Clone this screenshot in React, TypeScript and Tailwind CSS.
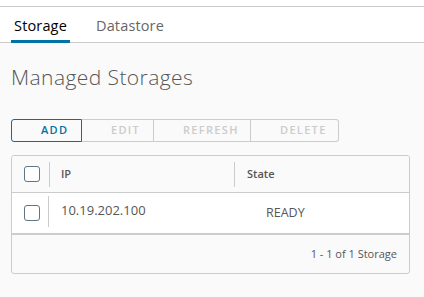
import React from 'react';

const font = { fontFamily: '"Open Sans", "Liberation Sans", sans-serif' };

function Checkbox() {
  return <div className="w-4 h-4 rounded-[3px] border border-[#5f7582] bg-white shrink-0" />;
}

export default function App() {
  const buttons = [
    { label: 'ADD', w: 'w-[71px]', active: true },
    { label: 'EDIT', w: 'w-[72px]', active: false },
    { label: 'REFRESH', w: 'w-[97px]', active: false },
    { label: 'DELETE', w: 'w-[88px]', active: false },
  ];

  return (
    <div className="w-[424px] h-[297px] bg-[#fafafa] overflow-hidden" style={font}>
      {/* Tabs */}
      <div className="bg-white pt-[6px]">
        <div className="border-t border-[#cccccc] border-b flex items-end h-[37px] pl-[11px]">
          <div className="w-[59px] h-full flex items-center justify-center border-b-[3px] border-[#0072a3] -mb-px pt-[3px] text-[14.5px] tracking-[0.01em] text-black">
            Storage
          </div>
          <div className="ml-[26px] h-full flex items-center pt-[2px] text-[14.5px] tracking-[0.01em] text-[#666666]">Datastore</div>
        </div>
      </div>

      <div className="px-[11px]">
        <h3 className="mt-[22px] text-[21px] leading-[24px] tracking-[0.02em] font-light text-[#565656]">Managed Storages</h3>

        {/* Button group */}
        <div className="flex mt-[30px]">
          {buttons.map((b, i) => (
            <div
              key={b.label}
              className={
                'h-[23px] flex items-center pl-[29px] text-[11px] font-semibold tracking-[0.12em] border ' +
                b.w +
                (b.active
                  ? ' border-[#0072a3] text-[#0072a3] rounded-l-[3px]'
                  : ' border-[#cccccc] text-[#cccccc] border-l-0') +
                (i === buttons.length - 1 ? ' rounded-r-[3px]' : '')
              }
            >
              {b.label}
            </div>
          ))}
        </div>

        {/* Data grid */}
        <div className="mt-[13px] w-[399px] border border-[#cccccc] rounded-[3px] overflow-hidden">
          <div className="h-[37px] flex items-center bg-[#fafafa] border-b border-[#cccccc]">
            <div className="pl-[12px] pr-[9px] h-full flex items-center">
              <Checkbox />
            </div>
            <div className="w-px h-[25px] bg-[#cccccc]" />
            <div className="w-[184px] pl-[11px] text-[11px] font-semibold text-[#565656]">IP</div>
            <div className="w-px h-[25px] bg-[#cccccc]" />
            <div className="pl-[12px] text-[11px] font-semibold text-[#565656]">State</div>
          </div>
          <div className="h-[42px] flex items-center bg-white border-b-2 border-[#cccccc]">
            <div className="pl-[12px] pr-[8px] h-full flex items-center">
              <Checkbox />
            </div>
            <div className="w-px h-[31px] bg-[#cccccc] -mt-[4px]" />
            <div className="w-[185px] pl-[12px] -mt-[4px] text-[13px] text-[#565656]">10.19.202.100</div>
            <div className="pl-[32px] text-[12.5px] text-[#565656]">READY</div>
          </div>
          <div className="h-[38px] flex items-center justify-end pr-[12px] text-[11px] text-[#565656]">
            1 - 1 of 1 Storage
          </div>
        </div>
      </div>
    </div>
  );
}
